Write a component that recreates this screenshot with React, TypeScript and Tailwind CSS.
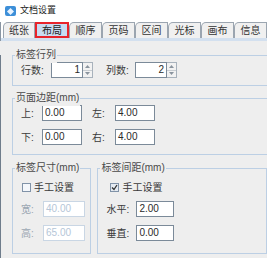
import React from 'react';

const tabs = ['纸张', '布局', '顺序', '页码', '区间', '光标', '画布', '信息'];

function Group({ title, className, children }: { title: string; className?: string; children: React.ReactNode }) {
  return (
    <div className={`relative border border-[#bccfe4] ${className || ''}`}>
      <span className="absolute -top-[9px] left-[2px] bg-[#eeeeee] px-[1px] leading-[16px] text-[#4a4a4a]">{title}</span>
      {children}
    </div>
  );
}

function Field({ value, width, disabled }: { value: string; width: string; disabled?: boolean }) {
  return (
    <div
      className={`${width} h-[16px] bg-white border flex items-center pl-[2px] leading-none ${
        disabled ? 'border-[#c9d6e4] text-[#b5c6d8]' : 'border-[#7b8a99] text-[#2a2a2a]'
      }`}
    >
      {value}
    </div>
  );
}

function Spinner({ value }: { value: string }) {
  return (
    <div className="flex h-[16px]">
      <div className="w-[32px] h-[16px] bg-white border border-[#7b8a99] flex items-center justify-end pr-[2px] leading-none text-[#2a2a2a]">
        {value}
      </div>
      <div className="w-[10px] h-[16px] flex flex-col border border-l-0 border-[#a8b2bc] bg-[#f2f2f2]">
        <div className="flex-1 flex items-center justify-center border-b border-[#c8cdd2]">
          <svg width="5" height="3" viewBox="0 0 5 3"><path d="M0 3L2.5 0L5 3Z" fill="#8a949e" /></svg>
        </div>
        <div className="flex-1 flex items-center justify-center">
          <svg width="5" height="3" viewBox="0 0 5 3"><path d="M0 0L2.5 3L5 0Z" fill="#8a949e" /></svg>
        </div>
      </div>
    </div>
  );
}

function Check({ checked }: { checked?: boolean }) {
  return (
    <div
      className={`w-[9px] h-[9px] border border-[#8193a8] flex items-center justify-center ${
        checked ? 'bg-[#e4eaf1]' : 'bg-[#f4f7fb]'
      }`}
    >
      {checked && (
        <svg width="7" height="7" viewBox="0 0 7 7">
          <path d="M1 3.5L3 5.5L6 1" stroke="#333" strokeWidth="1.3" fill="none" />
        </svg>
      )}
    </div>
  );
}

export default function App() {
  return (
    <div
      className="w-[267px] h-[258px] overflow-hidden bg-[#eeeeee] text-[10px] text-[#3a3a3a]"
      style={{ fontFamily: '"Liberation Sans", "Noto Sans CJK SC", sans-serif' }}
    >
      {/* Title bar */}
      <div className="h-[22px] bg-white flex items-center pl-[5px] gap-[4px]">
        <div className="w-[11px] h-[10px] rounded-[2px] bg-[#3d8fd8] flex items-center justify-center">
          <div className="w-[5px] h-[5px] rotate-45 bg-[#e8f3ff]" />
        </div>
        <span className="text-[9px] text-[#222]">文档设置</span>
      </div>

      {/* Tabs */}
      <div className="bg-white h-[16px] flex pl-[2px] border-l border-[#8a96a3]">
        {tabs.map((t, i) => (
          <div
            key={t}
            className={
              i === 1
                ? 'w-[34px] h-[16px] border-2 border-[#e8242b] bg-[#c9dcf1] flex items-center justify-center text-[#222]'
                : `${i === 0 ? 'w-[32px]' : 'w-[33px]'} h-[16px] border-t border-l border-r border-[#9ba5b0] rounded-tl-[5px] bg-[#f0f0f0] flex items-center justify-center text-[#333]`
            }
          >
            {t}
          </div>
        ))}
      </div>
      <div className="h-[3px] bg-[#d3e0ef] border-l border-[#8a96a3]" />

      {/* Content */}
      <div className="border-l border-[#6f7d8c] h-[217px] pl-[11px]">
        <Group title="标签行列" className="mt-[14px] w-[270px] h-[31px] pl-[8px] pt-[6px]">
          <div className="flex items-center h-[16px]">
            <span className="w-[30px]">行数:</span>
            <Spinner value="1" />
            <span className="ml-[13px] w-[29px]">列数:</span>
            <Spinner value="2" />
          </div>
        </Group>

        <Group title="页面边距(mm)" className="mt-[12px] w-[270px] h-[57px] pl-[8px] pt-[6px]">
          <div className="flex flex-col gap-[8px]">
            <div className="flex items-center">
              <span className="w-[21px]">上:</span>
              <Field value="0.00" width="w-[40px]" />
              <span className="ml-[10px] w-[23px]">左:</span>
              <Field value="4.00" width="w-[40px]" />
            </div>
            <div className="flex items-center">
              <span className="w-[21px]">下:</span>
              <Field value="0.00" width="w-[40px]" />
              <span className="ml-[10px] w-[23px]">右:</span>
              <Field value="4.00" width="w-[40px]" />
            </div>
          </div>
        </Group>

        <div className="flex mt-[13px] gap-[6px]">
          <Group title="标签尺寸(mm)" className="w-[84px] h-[86px] pl-[8px] pt-[10px]">
            <div className="flex items-center h-[16px] pl-[1px] gap-[3px]">
              <Check />
              <span>手工设置</span>
            </div>
            <div className="flex items-center mt-[6px]">
              <span className="w-[22px] text-[#9aa6b2]">宽:</span>
              <Field value="40.00" width="w-[42px]" disabled />
            </div>
            <div className="flex items-center mt-[8px]">
              <span className="w-[22px] text-[#9aa6b2]">高:</span>
              <Field value="65.00" width="w-[42px]" disabled />
            </div>
          </Group>

          <Group title="标签间距(mm)" className="w-[180px] h-[86px] pl-[8px] pt-[10px]">
            <div className="flex items-center h-[16px] pl-[4px] gap-[3px]">
              <Check checked />
              <span>手工设置</span>
            </div>
            <div className="flex items-center mt-[6px]">
              <span className="w-[30px]">水平:</span>
              <Field value="2.00" width="w-[38px]" />
            </div>
            <div className="flex items-center mt-[8px]">
              <span className="w-[30px]">垂直:</span>
              <Field value="0.00" width="w-[38px]" />
            </div>
          </Group>
        </div>
      </div>
    </div>
  );
}
